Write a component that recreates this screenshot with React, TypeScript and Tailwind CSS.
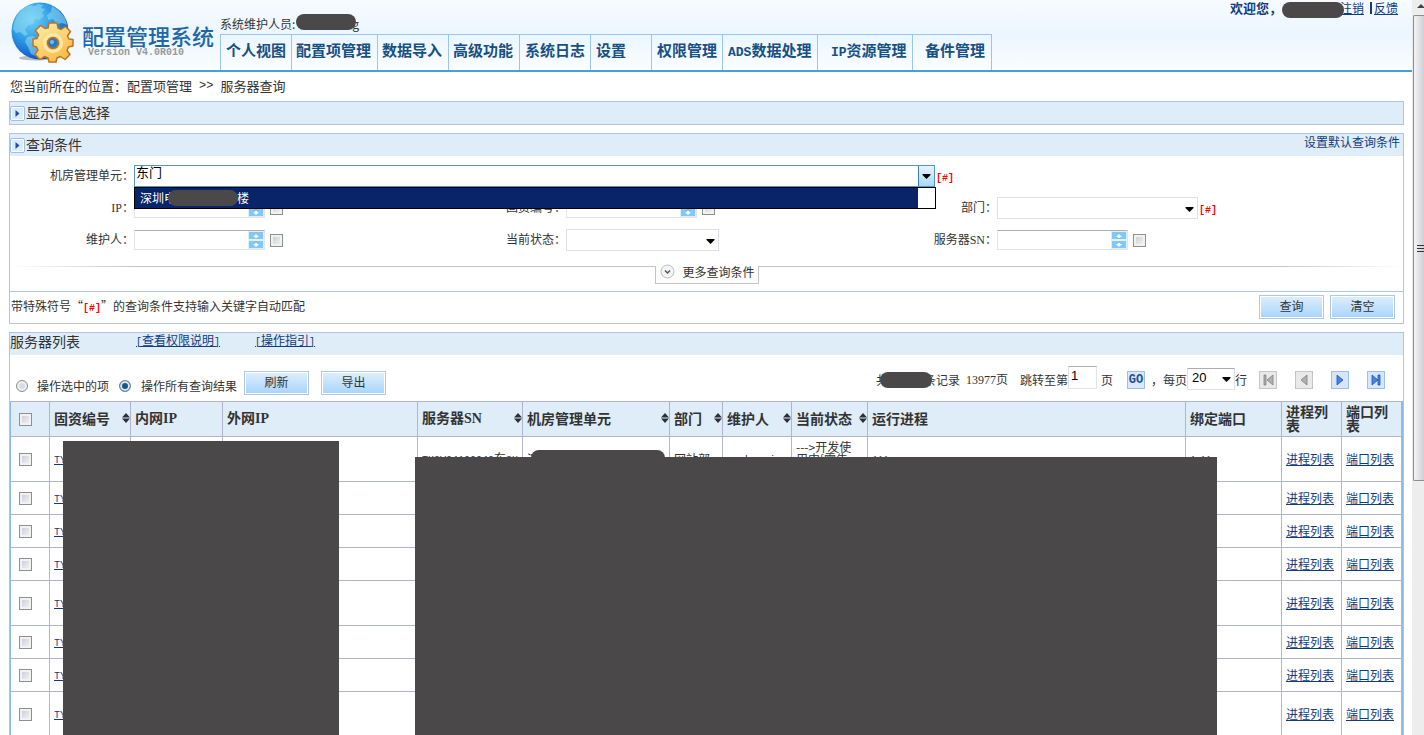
import type { ReactNode } from "react";

const navItems = [
    { label: "个人视图", className: "w-[71px] pl-[5px]" },
    { label: "配置项管理", className: "w-[86px] pl-1" },
    { label: "数据导入", className: "w-[71px] pl-1" },
    { label: "高级功能", className: "w-[71px] pl-1" },
    { label: "系统日志", className: "w-[71px] pl-[5px]" },
    { label: "设置", className: "w-[61px] pl-[5px]" },
    { label: "权限管理", className: "w-[71px] pl-[5px]" },
    { latin: "ADS", label: "数据处理", className: "w-[95px] pl-[5px]" },
    { latin: "IP", label: "资源管理", className: "w-[95px] pl-[13px]" },
    { label: "备件管理", className: "w-[80px] border-r pl-3" },
];

interface Column {
    label: string;
    latin?: string;
    width: string;
    sortable?: boolean;
}

const columns: Column[] = [
    { label: "固资编号", width: "w-[81px]", sortable: true },
    { label: "内网", latin: "IP", width: "w-[92px]" },
    { label: "外网", latin: "IP", width: "w-[195px]" },
    { label: "服务器", latin: "SN", width: "w-[105px]", sortable: true },
    { label: "机房管理单元", width: "w-[147px]", sortable: true },
    { label: "部门", width: "w-[53px]", sortable: true },
    { label: "维护人", width: "w-[69px]", sortable: true },
    { label: "当前状态", width: "w-[76px]", sortable: true },
    { label: "运行进程", width: "" },
    { label: "绑定端口", width: "w-[96px]" },
    { label: "进程列表", width: "w-[60px]" },
    { label: "端口列表", width: "w-[60px]" },
];

const rowHeights = ["h-[45px]", "h-[33px]", "h-[33px]", "h-[33px]", "h-[45px]", "h-[33px]", "h-[33px]", "h-[45px]"];

const Latin = ({ children }: { children: ReactNode }) => (
    <span className="font-['Liberation_Serif',serif]">{children}</span>
);

// half-width letters, 6px each beside 12px Chinese text
const Mono = ({ children }: { children: ReactNode }) => (
    <span className="font-['Liberation_Mono',monospace] text-[10px]">{children}</span>
);

const firstRow: ReactNode[] = [
    "",
    "",
    <><Mono>TKSV94100040</Mono>东<Mono>SH</Mono></>,
    <span className="text-[#123c80]">深</span>,
    "网站部",
    <Mono>weehengjun</Mono>,
    "--->开发使用中[需告警]",
    <Latin>111</Latin>,
    <Latin>1-11</Latin>,
];

const Mask = ({ className }: { className: string }) => (
    <span className={`relative inline-block shrink-0 rounded-full bg-[#4b4849] ${className}`} />
);

const Hash = ({ className = "" }: { className?: string }) => (
    <span className={`font-['Liberation_Mono',monospace] text-[10px] leading-4 font-bold text-[#f00] ${className}`}>[#]</span>
);

const Logo = () => (
    <svg width="64" height="62" viewBox="0 0 64 62" aria-hidden="true">
        <defs>
            <radialGradient id="globe" cx="0.35" cy="0.3" r="0.75">
                <stop offset="0" stopColor="#6fd2f6" />
                <stop offset="0.5" stopColor="#2f9be6" />
                <stop offset="1" stopColor="#0a4fc0" />
            </radialGradient>
            <linearGradient id="gear" x1="0" y1="0" x2="0.6" y2="1">
                <stop offset="0" stopColor="#fff0b0" />
                <stop offset="1" stopColor="#f7bd48" />
            </linearGradient>
        </defs>
        <ellipse cx="26" cy="57" rx="17" ry="2.500" fill="#b9bdc4" />
        <circle cx="30" cy="30" r="28.500" fill="url(#globe)" />
        <path
            d="M4 22C7 12 13 6 20 4l5 1 3-2 5 1-2 3 4 1-3 4 2 3-5 4-4-1-2 5-5 1-3 5 3 4-3 2-5-4-4 1-3-4zM42 5l7 5 6 7 2 7-5-2-5 1-4-5-5 1-1-5 4-3zM17 36l6-1 5 4 3 5-4 5-1 6-5-2-3-7-3-5z"
            fill="#8fdcf0"
            opacity="0.55"
        />
        <g transform="translate(43 40)">
            <path
                d="M-4-18h8l1 5 3 1.500 4.500-3 5 5-3 4.500L16-2l4 .5v6.500l-4.500 1-1.500 3.500 3 4-5 5-4.500-3L4 17l-1 4h-7l-1-4-3.500-1.500-4.500 3-5-5 3-4.500L-16.500 6-20 5v-7l4-.5 1.500-3.500-3-4.500 5-5 4.500 3L-5-13z"
                fill="url(#gear)"
                stroke="#c4701c"
                strokeWidth="1.500"
                strokeLinejoin="round"
            />
            <circle cy="2" r="8.500" fill="none" stroke="#ffe9a8" strokeWidth="3" />
            <circle cy="2" r="5.500" fill="#2a78c8" stroke="#c4701c" strokeWidth="1.500" />
            <circle cx="-1" cy="1" r="2" fill="#64c6f0" />
        </g>
    </svg>
);

const Arrow = () => (
    <svg width="9" height="5" viewBox="0 0 9 5" className="pointer-events-none" aria-hidden="true">
        <path d="M0.500 0h8v1L4.500 5 0.500 1z" fill="#000" />
    </svg>
);

const Checkbox = ({ label }: { label: string }) => (
    <input
        type="checkbox"
        aria-label={label}
        className="block size-[13px] shrink-0 appearance-none border border-[#8e8f8f] bg-linear-to-br from-[#c4c9d0] to-[#f8f8f8] shadow-[inset_0_0_0_2px_#f2f2f2]"
    />
);

const ExpandIcon = () => (
    <svg width="15" height="15" viewBox="0 0 15 15" className="mt-0.5 shrink-0" aria-hidden="true">
        <rect x="0.500" y="0.500" width="14" height="14" rx="1.500" fill="#fff" stroke="#9dbfe6" />
        <rect x="2" y="2" width="11" height="11" fill="#dcedfa" />
        <path d="M5.500 4v7l4-3.500z" fill="#2350a5" />
    </svg>
);

const SortIcon = () => (
    <svg width="8" height="10" viewBox="0 0 8 10" className="shrink-0" aria-hidden="true">
        <path d="M4 0l4 4.500H0zM4 10l4-4.500H0z" fill="#2b3038" />
    </svg>
);

const Button = ({ children }: { children: ReactNode }) => (
    <button
        type="button"
        className="h-6 w-[65px] border border-[#b0c8e0] bg-linear-to-b from-[#deeffc] to-[#a8d4fc] pb-0.5 text-xs leading-4 shadow-[inset_0_0_0_1px_#fff]"
    >
        {children}
    </button>
);

const SpinField = ({ id, label }: { id: string; label: string }) => (
    <div className="flex items-center gap-[5px]">
        <div className="flex h-5 w-[131px] border border-[#e2e4e8] border-t-[#abadb3] bg-white">
            <input id={id} className="w-[113px] px-1 text-xs outline-none" />
            <div className="flex w-4 flex-col bg-[#cdeaf4]">
                {["M4 0l3 3H5v1H3V3H1z", "M4 4L1 1h2V0h2v1h2z"].map((d) => (
                    <button
                        key={d}
                        type="button"
                        aria-label={label}
                        className="flex h-[9px] w-4 items-center justify-center border border-[#e4efec] bg-[#7fc8fc]"
                    >
                        <svg width="8" height="4" viewBox="0 0 8 4" aria-hidden="true">
                            <path d={d} fill="#fff" />
                        </svg>
                    </button>
                ))}
            </div>
        </div>
        <Checkbox label={label} />
    </div>
);

const SelectField = ({ id, width }: { id: string; width: string }) => (
    <div className={`relative ${width}`}>
        <select id={id} className="block h-[22px] w-full appearance-none border border-[#dcdfe3] bg-white" />
        <div className="absolute top-[10px] right-1">
            <Arrow />
        </div>
    </div>
);

const FieldLabel = ({ htmlFor, children }: { htmlFor: string; children: ReactNode }) => (
    <label htmlFor={htmlFor} className="pb-0.5 text-right">
        {children}
    </label>
);

const Header = () => (
    <header className="flex h-[72px] justify-between border-b-2 border-[#459ee2] bg-linear-to-b from-[#f7fbff] via-[#ebf6ff] to-[#fbfdff]">
        <div className="flex">
            <div className="flex w-[220px] pt-px pl-2.5">
                <Logo />
                <div className="pt-[18px] pl-2 whitespace-nowrap">
                    <h1 className="text-[22px] leading-8 font-medium text-[#2167a8]">配置管理系统</h1>
                    <p className="-mt-1 pl-1.5 font-['Liberation_Mono',monospace] text-[10px] leading-3 font-bold text-[#999]">
                        Version V4.0R010
                    </p>
                </div>
            </div>
            <div className="flex flex-col justify-end">
                <div className="flex h-5 items-center">
                    系统维护人员:
                    <Mask className="mb-1 ml-px h-4 w-[60px]" />
                    <span className="-ml-1">g</span>
                </div>
                <nav className="flex h-9 border-t border-[#99c6ee] text-[15px] leading-[30px] font-bold whitespace-nowrap text-[#175083]">
                    {navItems.map((item) => (
                        <a key={item.label} href="#" className={`border-l border-[#99c6ee] ${item.className}`}>
                            {item.latin && (
                                <span className="font-['Liberation_Mono',monospace] text-[13px]">{item.latin}</span>
                            )}
                            {item.label}
                        </a>
                    ))}
                </nav>
            </div>
        </div>
        <div className="flex h-4 items-center pr-3.5 text-[#123c80]">
            <span className="text-[13px] font-bold">欢迎您，</span>
            <Mask className="mt-1 -mr-1 h-4 w-[62px]" />
            <a href="#" className="underline">注销</a>
            <span className="mr-0.5 ml-1.5 h-3 w-0.5 bg-[#123c80]" />
            <a href="#" className="underline">反馈</a>
        </div>
    </header>
);

const SearchPanel = () => (
    <section className="mt-2 border border-[#b0c6df]">
        <div className="flex h-[22px] items-center justify-between bg-[#dfedf9] pr-[3px]">
            <h2 className="flex items-center gap-px pb-0.5 text-sm">
                <ExpandIcon />
                查询条件
            </h2>
            <a href="#" className="pb-1.5 text-[#123c80]">设置默认查询条件</a>
        </div>
        <form className="pt-1">
            <div className="grid auto-rows-[32px] grid-cols-[124px_308fr_124px_307fr_124px_406fr] items-center">
                <FieldLabel htmlFor="unit">机房管理单元：</FieldLabel>
                <div className="relative col-span-5 flex items-center gap-px">
                    <div className="flex h-[22px] w-[801px] border border-[#5795bf]">
                        <input id="unit" defaultValue="东门" className="min-w-0 grow px-px pb-2 text-[13px] text-black outline-none" />
                        <button
                            type="button"
                            aria-label="展开"
                            className="flex w-4 items-center justify-center border-l border-[#3c7fb1] bg-linear-to-b from-[#e6f5fd] to-[#a7d9f5]"
                        >
                            <Arrow />
                        </button>
                    </div>
                    <Hash className="self-end" />
                    <ul className="absolute top-full left-0 z-10 h-[22px] w-[802px] border border-black bg-white pr-[17px] text-white">
                        <li className="flex h-5 items-center bg-[#0a246a] pl-[5px]">
                            深圳电
                            <Mask className="-mx-2 h-4 w-[70px]" />
                            <span className="pl-[7px]">楼</span>
                        </li>
                    </ul>
                </div>

                <FieldLabel htmlFor="ip"><Latin>IP</Latin>：</FieldLabel>
                <SpinField id="ip" label="IP" />
                <FieldLabel htmlFor="asset">固资编号：</FieldLabel>
                <SpinField id="asset" label="固资编号" />
                <FieldLabel htmlFor="dept">部门：</FieldLabel>
                <div className="flex items-center gap-px">
                    <SelectField id="dept" width="w-[201px]" />
                    <Hash className="self-end" />
                </div>

                <FieldLabel htmlFor="owner">维护人：</FieldLabel>
                <SpinField id="owner" label="维护人" />
                <FieldLabel htmlFor="status">当前状态：</FieldLabel>
                <SelectField id="status" width="w-[153px]" />
                <FieldLabel htmlFor="sn">服务器<Latin>SN</Latin>：</FieldLabel>
                <SpinField id="sn" label="服务器SN" />
            </div>
            <div className="mt-2.5 flex h-[25px] items-start">
                <div className="h-px grow bg-linear-to-r from-white to-[#c4c4c4] to-20%" />
                <button
                    type="button"
                    className="flex h-[18px] w-[104px] items-center gap-2 border border-t-0 border-[#c4c4c4] bg-[#fdfdfb] pb-1.5 pl-1"
                >
                    <svg width="15" height="15" viewBox="0 0 15 15" className="shrink-0" aria-hidden="true">
                        <circle cx="7.500" cy="7.500" r="6.500" fill="#f2f4f6" stroke="#bcc0c6" />
                        <path d="M5 6.500l2.500 2.500L10 6.500" fill="none" stroke="#555" strokeWidth="1.500" />
                    </svg>
                    更多查询条件
                </button>
                <div className="h-px grow bg-linear-to-l from-white to-[#c4c4c4] to-20%" />
            </div>
            <div className="flex h-8 items-center border-t border-[#b0c6df] pr-2 pl-px">
                <p className="grow">
                    带特殊符号“<Hash />”的查询条件支持输入关键字自动匹配
                </p>
                <div className="flex gap-1.5 pb-px">
                    <Button>查询</Button>
                    <Button>清空</Button>
                </div>
            </div>
        </form>
    </section>
);

const pagerIcons = [
    { label: "首页", d: "M4 3h2v10H4zM13 3v10L7 8z", disabled: true },
    { label: "上一页", d: "M11 3v10L5 8z", disabled: true },
    { label: "下一页", d: "M5 3v10l6-5z", disabled: false },
    { label: "末页", d: "M4 3v10l6-5zM10 3h2v10h-2z", disabled: false },
];

const Toolbar = () => (
    <div className="flex h-[46px] items-end justify-between pr-[18px] pl-1.5">
        <div className="flex items-center pb-1.5">
            <input
                type="radio"
                id="picked"
                name="scope"
                className="mt-1.5 size-3 appearance-none rounded-full border border-[#8e8f8f] bg-[#d8dbdf] shadow-[inset_0_0_0_2px_#f0f0f0]"
            />
            <label htmlFor="picked" className="mt-1.5 mr-2.5 ml-[9px]">操作选中的项</label>
            <input
                type="radio"
                id="all"
                name="scope"
                defaultChecked
                className="mt-1.5 size-3 appearance-none rounded-full border border-[#7f8790] checked:bg-[#12598f] checked:shadow-[inset_0_0_0_2px_#dfe7ee]"
            />
            <label htmlFor="all" className="mt-1.5 mr-[7px] ml-2.5">操作所有查询结果</label>
            <Button>刷新</Button>
            <span className="w-3" />
            <Button>导出</Button>
        </div>
        <div className="flex items-center pb-2">
            共
            <Mask className="-mx-2 h-4 w-[52px]" />
            条记录
            <span className="ml-1.5"><Latin>13977</Latin>页</span>
            <label htmlFor="page" className="ml-3">跳转至第</label>
            <input
                id="page"
                defaultValue="1"
                className="mb-1 h-[23px] w-[29px] border border-[#dfe2e6] border-t-[#abadb3] pb-1 pl-0.5 font-['Liberation_Sans',sans-serif] text-[13px] text-black outline-none"
            />
            <span className="mr-3.5 ml-1">页</span>
            <button
                type="button"
                className="size-[18px] border border-[#9cc0e8] bg-[#dbe8f8] font-['Liberation_Mono',monospace] text-xs leading-4 font-bold text-[#1d4f9e]"
            >
                GO
            </button>
            <span className="ml-1.5 w-3">，</span>
            <label htmlFor="size">每页</label>
            <div className="relative mb-0.5">
                <select
                    id="size"
                    className="block h-[22px] w-12 appearance-none border border-[#dfe2e6] border-t-[#abadb3] pb-0.5 pl-1 font-['Liberation_Sans',sans-serif] text-[13px] text-black"
                >
                    <option>20</option>
                </select>
                <div className="absolute top-[9px] right-1">
                    <Arrow />
                </div>
            </div>
            行
            <div className="ml-3 flex gap-[18px]">
                {pagerIcons.map((icon) => (
                    <button
                        key={icon.label}
                        type="button"
                        aria-label={icon.label}
                        className={`size-[18px] border ${icon.disabled ? "border-[#c6c6c6] bg-[#e9e9e9]" : "border-[#9cbfe8] bg-[#d8e6f8]"}`}
                    >
                        <svg width="16" height="16" viewBox="0 0 16 16" aria-hidden="true">
                            <path
                                d={icon.d}
                                fill={icon.disabled ? "#b0b0b0" : "#3f86e8"}
                                stroke={icon.disabled ? "#808080" : "#1f56b8"}
                                strokeWidth="0.800"
                            />
                        </svg>
                    </button>
                ))}
            </div>
        </div>
    </div>
);

const ServerTable = () => (
    <div className="relative">
        <table className="w-full table-fixed border-separate border-spacing-0 border-t border-r border-l border-t-[#b0b4cc] border-r-[#8db8e8] border-l-[#8db8e8]">
            <thead>
                <tr className="h-[35px] bg-[#dfedf9] text-left text-sm leading-[14px]">
                    <th className="w-[39px] border-r border-b border-[#b0b4cc] pl-2">
                        <Checkbox label="全选" />
                    </th>
                    {columns.map((column) => (
                        <th key={column.label} className={`border-r border-b border-[#b0b4cc] pb-0.5 pl-1 ${column.width}`}>
                            <div className="flex items-center justify-between">
                                <span>
                                    {column.label}
                                    {column.latin && <Latin>{column.latin}</Latin>}
                                </span>
                                {column.sortable && <SortIcon />}
                            </div>
                        </th>
                    ))}
                </tr>
            </thead>
            <tbody className="leading-3 [&_td]:border-r [&_td]:border-b [&_td]:border-[#b0b4cc] [&_td]:pl-1">
                {rowHeights.map((height, row) => (
                    <tr key={row} className={height}>
                        <td>
                            <div className="pl-1"><Checkbox label={`选择第${row + 1}行`} /></div>
                        </td>
                        <td><a href="#" className="text-[#123c80] underline"><Mono>TY</Mono></a></td>
                        {firstRow.map((content, index) => (
                            <td key={index} className={index === 6 ? "pr-3 break-all" : "whitespace-nowrap"}>
                                {row === 0 && content}
                            </td>
                        ))}
                        <td><a href="#" className="text-[#123c80] underline">进程列表</a></td>
                        <td><a href="#" className="text-[#123c80] underline">端口列表</a></td>
                    </tr>
                ))}
            </tbody>
        </table>
        {/* hidden data */}
        <div className="absolute top-10 bottom-0 left-[53px] w-[276px] bg-[#4b4849]" />
        <div className="absolute top-[49px] left-[521px] h-5 w-[134px] rounded-t-lg bg-[#4b4849]" />
        <div className="absolute top-14 right-[186px] bottom-0 left-[405px] bg-[#4b4849]" />
    </div>
);

const ScrollTrack = () => (
    <div className="w-3 shrink-0 overflow-hidden bg-[#ededed]" aria-hidden="true">
        <svg width="12" height="15" viewBox="0 0 12 15">
            <path d="M5 8l4-4 4 4z" fill="#444" />
        </svg>
        <div className="ml-px flex h-[466px] items-center justify-end rounded-l-xs border border-r-0 border-[#8c8c8c] bg-linear-to-r from-[#f5f5f5] to-[#cfcfd6]">
            <div className="flex w-[7px] flex-col gap-0.5">
                <span className="h-px bg-[#333]" />
                <span className="h-px bg-[#333]" />
                <span className="h-px bg-[#333]" />
            </div>
        </div>
    </div>
);

const App = () => (
    <div className="flex h-screen overflow-hidden bg-white font-['Noto_Sans_CJK_SC',sans-serif] text-xs leading-4 text-[#333]">
        <div className="min-w-0 grow">
            <Header />
            <main className="pr-2 pl-[9px]">
                <p className="flex h-[29px] items-center gap-[7px] pb-0.5 pl-px text-[13px]">
                    <span>您当前所在的位置：配置项管理</span>
                    <span className="font-['Liberation_Mono',monospace] text-xs">&gt;&gt;</span>
                    <span>服务器查询</span>
                </p>
                <section className="flex h-6 items-center border border-[#b0c6df] bg-[#dfedf9]">
                    <h2 className="flex items-center gap-px pb-0.5 text-sm">
                        <ExpandIcon />
                        显示信息选择
                    </h2>
                </section>
                <SearchPanel />
                <section className="mt-2 border border-[#b0c6df]">
                    <div className="flex h-[22px] items-center bg-[#dfedf9] pb-1.5">
                        <h2 className="w-[126px] text-sm leading-4">服务器列表</h2>
                        <a href="#" className="mr-[35px] text-[#123c80] underline"><Mono>[</Mono>查看权限说明<Mono>]</Mono></a>
                        <a href="#" className="text-[#123c80] underline"><Mono>[</Mono>操作指引<Mono>]</Mono></a>
                    </div>
                    <Toolbar />
                    <ServerTable />
                </section>
            </main>
        </div>
        <ScrollTrack />
    </div>
);

export default App;
